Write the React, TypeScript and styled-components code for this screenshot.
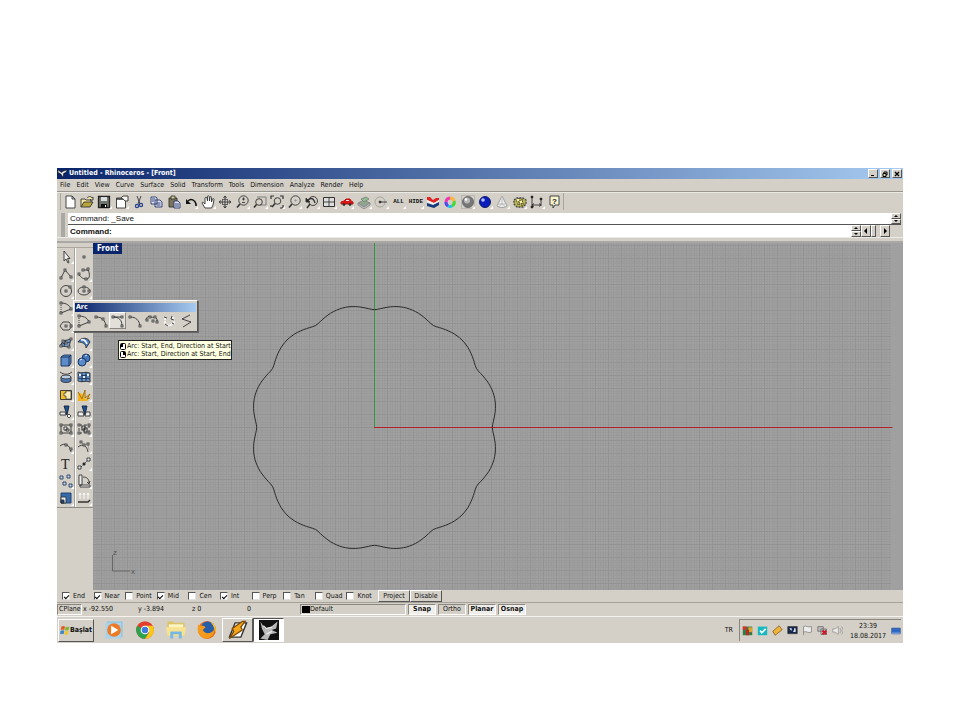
import React from 'react';
import styled, { createGlobalStyle, css } from 'styled-components';

const ui = '"DejaVu Sans Condensed", "Noto Sans", sans-serif';
const face = '#d4d0c8';

const Global = createGlobalStyle`
  *, *::before, *::after { box-sizing: border-box; }
  body { margin: 0; background: #fff; color: #111; font-family: ${ui}; font-size: 7px; line-height: 9px; }
  button, input { font: inherit; color: inherit; margin: 0; padding: 0; border: 0; background: none; }
  svg { display: block; }
`;

const raised = css`
  background: ${face};
  border: 1px solid;
  border-color: #fff #555 #555 #fff;
`;
const sunken = css`
  border: 1px solid;
  border-color: #8a8780 #fff #fff #8a8780;
`;

const Page = styled.main`padding: 168px 57px 77px;`;
const Window = styled.div`background: ${face}; display: flex; flex-direction: column; white-space: nowrap;`;

const TitleBar = styled.header`
  height: 11px; display: flex; align-items: center; gap: 1px; padding: 0 1px;
  background: linear-gradient(90deg, #0a246a, #a6caf0); color: #fff;
`;
const Title = styled.h1`margin: 0; flex: 1; font: bold 7px/9px ${ui};`;
const CaptionButton = styled.button<{ $spaced?: boolean }>`
  ${raised} width: 10px; height: 9px; display: grid; place-items: center;
  & + & { margin-left: ${p => (p.$spaced ? 1 : -1)}px; }
`;
const MenuBar = styled.nav`
  height: 13px; display: flex; align-items: center; gap: 6px; padding: 0 3px;
  border-bottom: 1px solid #9a9790;
`;
const MenuItem = styled.button`line-height: 9px;`;

const ToolBar = styled.div`height: 21px; display: flex; align-items: flex-start; padding-left: 3px; border-top: 1px solid #eceae5;`;
const ToolGrid = styled.div`
  width: 504px; height: 17px; display: grid; grid-template-columns: repeat(29, 1fr);
  border-left: 1px solid #aaa69e; border-right: 1px solid #aaa69e;
`;
const ToolButton = styled.button<{ $hot?: boolean; $flyout?: boolean }>`
  display: grid; place-items: center; min-width: 0; min-height: 0; position: relative;
  ${p => p.$hot && css`border: 1px solid; border-color: #fff #8a8780 #8a8780 #fff; background: #e3e0da;`}
  ${p => p.$flyout && css`
    &::after { content: ''; position: absolute; right: 1px; bottom: 1px; border-left: 3px solid transparent; border-bottom: 3px solid #fff; }
  `}
`;

const CommandArea = styled.section`
  display: flex; gap: 3px; padding: 0 2px 0 4px; font-family: "Liberation Sans", sans-serif; font-size: 8px;
`;
const Grip = styled.div`width: 4px; background: #aaa8a4;`;
const CommandRows = styled.div`flex: 1; display: flex; flex-direction: column;`;
const CommandRow = styled.div<{ $top?: boolean }>`
  height: 12px; display: flex; padding-right: ${p => (p.$top ? 0 : 11)}px;
  border-bottom: ${p => (p.$top ? '1px solid #555' : '0')};
`;
const CommandLine = styled.label<{ $strong?: boolean }>`
  flex: 1; display: flex; align-items: center; gap: 2px; background: #fff; padding-left: 2px;
  font-weight: ${p => (p.$strong ? 'bold' : 'normal')};
  input { flex: 1; min-width: 0; height: 10px; outline: 0; font-weight: normal; }
`;
const Spinner = styled.div`width: 10px; display: flex; flex-direction: column;`;
const Step = styled.button`${raised} flex: 1; min-height: 0; display: grid; place-items: center;`;
const HScroll = styled.div`display: flex; width: 29px;`;
const ScrollButton = styled.button<{ $end?: boolean }>`
  ${raised} width: 10px; display: grid; place-items: center; margin-left: ${p => (p.$end ? 'auto' : '0')};
`;
const Thumb = styled.div`${raised} width: 5px;`;
const Seam = styled.div`height: 6px; border-bottom: 2px solid #aaa8a4; border-top: 1px solid #eceae5;`;

const Workspace = styled.div`display: flex; position: relative; height: 347px;`;
const Side = styled.aside`width: 36px; padding-top: 4px;`;
const Palette = styled.div`
  height: 261px; display: grid; grid-template: repeat(15, 1fr) / 1fr 1fr; border-bottom: 1px solid #918e87; border-top: 1px solid #aaa69e;
  background: linear-gradient(90deg, transparent 17px, #a5a29b 17px, #a5a29b 18px, #fff 18px, #fff 19px, transparent 19px);
`;
const Viewport = styled.section`flex: 1; min-width: 0; position: relative; background: #a0a0a0;`;
const ViewLabel = styled.h2`
  position: absolute; left: 0; top: 0; margin: 0; padding: 0 4px; background: #0a246a; color: #fff;
  font: bold 8px/11px ${ui};
`;
const Floating = styled.div`
  ${raised} position: absolute; left: 16px; top: 57px; width: 125px; padding: 2px 1px; box-shadow: 1px 1px 0 #666;
`;
const FloatingTitle = styled.h3`
  margin: 0; padding-left: 1px; font: bold 7px/9px ${ui}; color: #fff; background: linear-gradient(90deg, #0a246a, #a6caf0);
`;
const FloatingTools = styled.div`height: 17px; display: grid; grid-template-columns: repeat(7, 17px);`;
const Tooltip = styled.div`
  position: absolute; left: 61px; top: 97px; padding: 1px 0 1px 1px; background: #ffffe1; border: 1px solid #222;
  line-height: 8px;
`;
const TipLine = styled.div`display: flex; align-items: center; gap: 1px;`;

const SnapBar = styled.div`height: 13px; display: flex; align-items: center; padding-left: 5px; border-bottom: 1px solid #a5a29b;`;
const SnapGrid = styled.div`width: 316px; display: grid; grid-template-columns: repeat(10, 1fr);`;
const Check = styled.label`
  display: flex; align-items: center; gap: 3px;
  input { appearance: none; width: 8px; height: 8px; background: #fff; border: 1px solid; border-color: #555 #e4e1dc #e4e1dc #555; display: grid; place-items: center; }
  input:checked::after { content: ''; width: 5px; height: 3px; border: solid #000; border-width: 0 0 1px 1px; transform: rotate(-45deg); }
`;
const PushButton = styled.button`${raised} width: 32px; height: 12px; line-height: 9px;`;

const StatusBar = styled.div`height: 13px; display: flex; align-items: center; padding: 1px 0;`;
const Pane = styled.div<{ $w: number; $sunken?: boolean }>`
  width: ${p => p.$w}px; height: 11px; display: flex; align-items: center; padding-left: 1px;
  ${p => p.$sunken && sunken}
`;
const Swatch = styled.i`width: 8px; height: 7px; background: #000;`;
const Toggle = styled.button<{ $on?: boolean }>`
  ${sunken} width: 28px; height: 11px; line-height: 9px; margin-left: 2px;
  ${p => p.$on && css`font-weight: bold; background: #efeeeb;`}
`;

const TaskBar = styled.footer`height: 27px; display: flex; align-items: center; border-top: 1px solid #f4f3f0; padding: 0 2px 0 1px;`;
const Start = styled.button`
  ${raised} width: 36px; height: 23px; display: flex; align-items: center; justify-content: center; font-weight: bold; margin-right: 4px;
`;
const Task = styled.button<{ $state?: 'up' | 'down' }>`
  width: 31px; height: 24px; display: grid; place-items: center; border: 1px solid transparent;
  ${p => p.$state === 'up' && raised}
  ${p => p.$state === 'down' && css`${sunken} background: #fff; border-color: #555 #fff #fff #555;`}
`;
const Language = styled.span`margin-left: auto; margin-right: 6px;`;
const Tray = styled.div`${sunken} flex: none; height: 22px; display: flex; align-items: center; border-right: 0; border-bottom: 0;`;
const TrayButton = styled.button`width: 15px; height: 14px; display: grid; place-items: center;`;
const Clock = styled.time`width: 46px; text-align: center; line-height: 10px;`;

const K = '#333';
const Node = ({ x, y }: { x: number; y: number }) => <rect x={x - 1} y={y - 1} width="2" height="2" fill="#ddd" stroke={K} strokeWidth="0.8" />;
const nodes = (...pts: number[][]) => pts.map(([x, y], i) => <Node key={i} x={x} y={y} />);

const Icon = ({ children, size = 14 }: { children: React.ReactNode; size?: number }) => (
  <svg width={size} height={size} viewBox="0 0 14 14" fill="none" stroke={K} strokeWidth="0.9" aria-hidden="true">{children}</svg>
);

const lens = (extra: React.ReactNode) => <><circle cx="7.5" cy="5.5" r="4.7" /><path d="M4 9L1 12.5" strokeWidth="1.6" />{extra}</>;

const tools: [string, React.ReactNode, boolean?][] = [
  ['New', <path d="M3 1h6l3 3v9H3zM9 1v3h3" fill="#fff" />],
  ['Open', <><path d="M1 12V4h4l1 1h5v2M7 3c2-2 4-2 5 0l1-1v3h-3l1-1" fill="#f3e69b" /><path d="M1 12l3-5h9l-3 5z" fill="#b9a53a" /></>],
  ['Save', <><path d="M1.5 1.5h11v11h-11z" fill="#6e756d" stroke="#222" strokeWidth="1.3" /><path d="M4 2h6v4H4z" fill="#ddd" stroke="none" /><path d="M4 9h6v4H4z" fill="#111" stroke="none" /><path d="M8 10h1v2H8z" fill="#fff" stroke="none" /></>, true],
  ['Properties', <><path d="M1.500 3h9v10h-9z" fill="#fff" /><path d="M1.500 4h9" strokeWidth="1.500" /><path d="M6 3l2-2h5v5h-3L8 4z" fill="#f3f1ec" /></>, true],
  ['Cut', <><path d="M5 1l3 8M9 1L6 9" stroke="#334" /><circle cx="5" cy="11" r="1.600" stroke="#25408d" strokeWidth="1.200" /><circle cx="9" cy="10" r="1.600" stroke="#25408d" strokeWidth="1.200" /></>],
  ['Copy', <><path d="M2 2h5l1 1v6H2zM6 5h5l2 2v5H6z" fill="#dfe3f4" stroke="#29356b" /><path d="M3 4h3M3 6h2M7.500 8h4M7.500 10h4" stroke="#29356b" /></>],
  ['Paste', <><path d="M2 3h8v9H2z" fill="#7c7559" /><path d="M4 1h4v3H4z" fill="#d7ce92" /><path d="M7 6h4l2 2v5H7z" fill="#dfe3f4" stroke="#29356b" /><path d="M8 9h4M8 11h4" stroke="#29356b" /></>],
  ['Undo', <><path d="M4 6c3-3 7-1 8 3v2" strokeWidth="1.600" stroke="#111" /><path d="M2 4v5h5z" fill="#111" stroke="none" /></>, true],
  ['Pan', <path d="M4 13L1 8c0-1 1-1 2 0l1 1V3c0-1 2-1 2 0l.5 3V1.500c0-1 1.500-1 1.700 0L8.500 6l.5-4c.3-1 1.500-.5 1.500.500L10.500 7l1-3c.500-1 1.500-.5 1.500.5L12 10l-1.500 3z" fill="#fff" />, true],
  ['Rotate view', <><path d="M7 1v12M1 7h12M5.500 3L7 1l1.500 2M5.500 11L7 13l1.500-2M3 5.500L1 7l2 1.500M11 5.500L13 7l-2 1.500" /><path d="M4 5c2-1 4-1 6 0M4 9c2 1 4 1 6 0M5 4c-1 2-1 4 0 6M9 4c1 2 1 4 0 6" strokeWidth=".7" /></>],
  ['Zoom dynamic', lens(<path d="M6 4h3M7.500 2.500v3M6 7.500h3" />), true],
  ['Zoom window', <><path d="M4 2h9v8H7" stroke="#777" /><circle cx="6" cy="7" r="3.300" /><path d="M3.500 9.500L1 12.500" strokeWidth="1.6" /></>, true],
  ['Zoom extents', <><path d="M1 4V1h3M10 1h3v3M13 10v3h-3M1 10v2" strokeWidth="1.2" /><circle cx="7.500" cy="6" r="3.300" /><path d="M5 8.500L2 12" strokeWidth="1.6" /></>, true],
  ['Zoom selected', lens(<circle cx="7.500" cy="5.500" r=".8" fill="#999" stroke="#999" />), true],
  ['Undo view', <><circle cx="8" cy="6" r="4.500" /><path d="M5 9l-3 4M3 5c4-3 6-1 7 3" strokeWidth="1.400" /><path d="M1 3v4h4z" fill="#222" /></>, true],
  ['Four viewports', <><path d="M1.500 2.500h11v9h-11z" fill="#dedede" strokeWidth="1" /><path d="M7 2v10M1 7h12" /></>, true],
  ['Named view', <><path d="M1 9V7l3-1 2-2h4l1 2 2 1v2z" fill="#df1515" stroke="#b40b0b" /><path d="M6 5.500h3" stroke="#fff" /><circle cx="4" cy="9.500" r="1" fill="#222" /><circle cx="10" cy="9.500" r="1" fill="#222" /></>, true],
  ['Set cplane', <><path d="M1 8l6-3 6 3-6 4z" fill="#8fa690" stroke="#888" /><path d="M1 8v2l6 4 6-4V8l-6 4z" fill="#c2c2c2" stroke="#888" /><path d="M4 4l5-2 3 2-5 3z" fill="#91bd92" stroke="#798579" /></>, true],
  ['Circle', <><circle cx="6" cy="7" r="5" stroke="#a0a09a" /><path d="M6 7h7" /><circle cx="6" cy="7" r="1" fill="#222" /></>, true],
];

const late: [string, React.ReactNode, boolean?][] = [
  ['Layers', <><path d="M1 2h3l3 3 3-2h3v2L8 8 1 5z" fill="#e32222" stroke="none" /><path d="M1 5l7 3 5-3v2L8 10 1 7z" fill="#f4f4f4" stroke="none" /><path d="M1 8l6 2 6-3v3l-5 3-7-2z" fill="#173a7b" stroke="none" /></>],
  ['Colors', <g strokeWidth="3"><path d="M7 3a4.300 4.300 0 0 1 4 3" stroke="#ffb23a" /><path d="M11 6a4.300 4.300 0 0 1-2 5" stroke="#48d838" /><path d="M9 11a4.300 4.300 0 0 1-4 0" stroke="#22c3e0" /><path d="M5 11a4.300 4.300 0 0 1-2-4" stroke="#5146ef" /><path d="M3 7a4.300 4.300 0 0 1 4-4" stroke="#ef39b4" /></g>],
  ['Shade', <><circle cx="7" cy="7" r="5.500" fill="#777" stroke="#666" /><circle cx="6" cy="5.500" r="3" fill="#b8b8b8" stroke="none" /><circle cx="5" cy="4.500" r="1.200" fill="#fff" stroke="none" /><path d="M.5.5h13v13H.5z" stroke="#999" strokeDasharray="1 1" /></>, true],
  ['Render', <><circle cx="7" cy="7" r="5.500" fill="#0b1ebc" stroke="#07115e" /><circle cx="5" cy="5" r="1.800" fill="#b9c5ff" stroke="none" /></>, true],
  ['Spotlight', <><path d="M7 1L2 11c2 2 8 2 10 0z" fill="#eee" stroke="#999" /><path d="M7 1v9M3 9h8M4 12l3-4 3 4" stroke="#bbb" /></>, true],
  ['Options', <><path d="M1 5l3-2h6l3 2v4l-3 3H4L1 9z" fill="#b9b355" stroke="#444" strokeDasharray="2 1" strokeWidth="1.300" /><path d="M3 6h8M4 9h7M6 3v8M9 4v7" strokeDasharray="1 1" stroke="#333" /><path d="M4 4h2v2H4zM7 6h2v2H7z" fill="#f2efbf" stroke="none" /></>, true],
  ['Dimension', <><path d="M2 2v10M11 4v7M2 10h9M4 8.500L2 10l2 1.500M9 8.500l2 1.500-2 1.500" /><path d="M1 1h2v2H1zM10 3h2v2h-2zM1 11h2v2H1z" fill="#222" strokeWidth=".5" /></>, true],
];

const arcSpan = <><path d="M2 2c6 0 9 3 10 6L2 12" /><path d="M2 2v10" strokeDasharray="1 1" />{nodes([2, 2], [12, 8], [2, 12])}</>;

const palette: [string, React.ReactNode][] = [
  ['Select', <path d="M5 1v10l2-2 2 4 1-.5-1.500-4H11z" fill="#eee" />],
  ['Point', nodes([7, 7])],
  ['Polyline', <><path d="M2 11L6 3l7 8" />{nodes([2, 11], [6, 3], [12, 10])}</>],
  ['Curve', <><path d="M6 3h5c2 3 2 9-1 9-3 0-4 0-8-4" />{nodes([6, 3], [11, 2], [2, 7], [9, 12])}</>],
  ['Circle', <><circle cx="7" cy="7" r="5.500" />{nodes([7, 7], [11, 3])}</>],
  ['Ellipse', <><ellipse cx="7" cy="7" rx="6" ry="4" />{nodes([7, 7], [7, 3], [12, 7])}</>],
  ['Arc', arcSpan],
  ['Rectangle', <><path d="M2 3h10v8H2z" />{nodes([2, 11], [12, 3])}</>],
  ['Polygon', <><path d="M4 3h6l3 4-3 4H4L1 7z" />{nodes([7, 7], [12, 7])}</>],
  ['Rounded', <><path d="M3 3h6c4 0 4 8 0 8H3z" />{nodes([3, 11], [10, 4])}</>],
  ['Surface points', <><path d="M1 10l3-5 8-2-2 8z" fill="#7ea0cf" /><path d="M3 8l8-2M7 4l-2 6" stroke="#234" />{nodes([2, 10], [4, 5], [12, 3], [10, 11], [7, 7])}</>],
  ['Surface', <><path d="M1 6c3-5 10-5 12 0l-4 6c0-4-3-6-8-6z" fill="#487bc0" /><path d="M4 4c3-1 5 1 6 4" stroke="#fff" strokeWidth="1.600" /></>],
  ['Box', <path d="M2 4l3-2h7v8l-2 3H2zM2 4h8v9M10 4l2-2" fill="#5d8cc8" stroke="#122d57" />],
  ['Sphere', <><circle cx="9" cy="5" r="4" fill="#4477bb" stroke="#122d57" /><circle cx="5" cy="9" r="4" fill="#5c8bcb" stroke="#122d57" /><path d="M3 7l2-1M8 3l2-1" stroke="#fff" /></>],
  ['Tube', <><path d="M2 7v4c2 2 8 2 10 0V7" fill="#4878b5" /><ellipse cx="7" cy="7" rx="5" ry="2" fill="#b8cde6" /><path d="M1 2c4 3 8 3 12 0" /></>],
  ['Mesh', <><path d="M1 2c4 2 7-1 12 1v9c-4-2-8 1-12-1z" fill="#6c94c6" /><path d="M1 5c4 2 8-1 12 1M1 8c4 2 8-1 12 1M5 3v9M9 2v9" stroke="#122d57" /><path d="M2 4h2v2H2zM6 6h2v2H6zM10 4h2v2h-2z" fill="#e8eef5" stroke="none" /></>],
  ['Puzzle', <><path d="M1.500 2.500h11v9h-11z" fill="#f3be2a" /><path d="M7 3v2H5v3h2v3h5V3z" fill="#f8edba" strokeWidth=".7" /></>],
  ['Explode', <><path d="M1 13V5l3 3 2-1 2 4 4-1-2 3z" fill="#f5b31b" stroke="none" /><path d="M1 4l4 7 3-9v8l5-4-3 5 3-1" stroke="#9b6b08" fill="#f5b31b" /></>],
  ['Trim', <><path d="M5 1h5L8 10z" fill="#1d5094" stroke="#123" /><path d="M1 7h5l1 3H1z" fill="#eee" /><path d="M8 11l2-2 2 2-2 2z" fill="#fff" /></>],
  ['Split', <><path d="M5 1h5L8 10z" fill="#1d5094" stroke="#123" /><path d="M1 7h5l1 4H1zM9 7h4v4H8z" fill="#eee" /></>],
  ['Group', <><path d="M2 3h10v8H2z" /><path d="M5 5h3v3H5zM7 7h3v2H7z" fill="#eee" />{nodes([2, 3], [12, 3], [2, 11], [12, 11])}</>],
  ['Ungroup', <><path d="M2 3h10v8H2z" strokeDasharray="3 2" /><path d="M5 4h3v4H5zM7 6h3v4H7z" strokeWidth="1.200" fill="#eee" />{nodes([2, 3], [12, 3], [2, 11], [12, 11])}</>],
  ['Edit points', <><path d="M1 6c5-4 10-1 11 6" />{nodes([7, 5], [12, 9])}</>],
  ['Control points', <><path d="M1 7c5-4 9-1 10 5" /><path d="M4 2l3 3 4-1 1 6" stroke="#888" strokeWidth=".6" />{nodes([4, 2], [7, 5], [11, 4])}</>],
  ['Text', <text x="2" y="12" fontFamily="Liberation Serif" fontSize="14" fill="#222" stroke="none">T</text>],
  ['Move', <><path d="M4 10l6-6" strokeDasharray="2 1" /><path d="M1 9h3v3H1zM10 1h3v3h-3z" fill="#eee" /><path d="M6 6h2v2H6z" fill="#111" /></>],
  ['Copy objects', <path d="M1 2h3v3H1zM8 1h3v3H8zM4 8h3v3H4zM10 10h3v3h-3z" fill="#c9d7e8" stroke="#223a60" />],
  ['Rotate', <><path d="M2 1h3v10H2zM3 11h10v2H3z" fill="#eee" /><path d="M6 3c4 0 6 2 6 6M10 8l2 2 1-3" /></>],
  ['Scale', <><path d="M2 2h10v10H2z" fill="#386aa9" stroke="#193b6a" /><path d="M2 6h5v6H2z" fill="#e8edf3" /><path d="M2 9h3v3H2z" fill="#19447e" /></>],
  ['Analyze', <><path d="M1 11h10l2-2" strokeWidth="1.400" /><path d="M3 8V3M7 8V3M11 8V3M2 4l1-2 1 2M6 4l1-2 1 2M10 4l1-2 1 2" stroke="#fff" /></>],
];

const arcs: [string, React.ReactNode][] = [
  ['Center, start, angle', arcSpan],
  ['Start, end, point', <><path d="M2 3c6 0 9 3 10 9" />{nodes([2, 3], [9, 5], [12, 12])}</>],
  ['Start, end, direction', <><path d="M2 3c6 0 9 3 9 9M2 3h9" />{nodes([2, 3], [11, 3], [11, 12])}</>],
  ['Start, end, radius', <><path d="M2 3c6 0 9 3 10 9" />{nodes([2, 3], [12, 12])}</>],
  ['Through points', <><path d="M1 6c1-4 3-4 5-3s4-1 6 2v4" />{nodes([2, 6], [5, 3], [10, 3], [8, 7], [12, 8])}</>],
  ['Tangent', <><path d="M3 3v6l4 3 5-3-1-6" stroke="#f4f4f4" strokeWidth="2" strokeDasharray="3 1" /><path d="M2 3l3 1M10 2l-1 3 3 1M3 10l3 2M10 9l2 1" /></>],
  ['Polyline arc', <path d="M11 1L3 5l9 3-8 5" />],
];

const scallop = Array.from({ length: 241 }, (_, i) => {
  const a = (i / 240) * Math.PI * 2;
  const r = 116.6 + 7 * Math.sqrt(Math.sin(6 * a) ** 2 + 0.03);
  return `${i ? 'L' : 'M'}${(281.5 + r * Math.cos(a)).toFixed(1)} ${(184.5 - r * Math.sin(a)).toFixed(1)}`;
}).join('') + 'Z';

const Arrow = ({ d }: { d: string }) => <svg width="6" height="6" viewBox="0 0 6 6"><path d={d} fill="#000" /></svg>;
const TinyArrow = ({ up }: { up?: boolean }) => <svg width="4" height="2" viewBox="0 0 4 2"><path d={up ? 'M0 2L2 0l2 2z' : 'M0 0l2 2 2-2z'} fill="#000" /></svg>;
const Steps = () => (
  <Spinner>
    <Step aria-label="Up"><TinyArrow up /></Step>
    <Step aria-label="Down"><TinyArrow /></Step>
  </Spinner>
);
const Mouse = ({ right }: { right?: boolean }) => (
  <svg width="6" height="7" viewBox="0 0 6 7"><rect x=".5" y=".5" width="5" height="6" rx="1" fill="#fff" stroke="#000" /><path d={right ? 'M3 1h2v3H3z' : 'M1 1h2v3H1z'} fill="#000" /></svg>
);

const tasks: [string, React.ReactNode, ('up' | 'down')?][] = [
  ['Media player', <g stroke="none"><path d="M2 1h11v11H2z" fill="#91c6e6" /><path d="M1 2h11v11H1z" fill="#a9d3ec" /><circle cx="7" cy="7" r="4.800" fill="#ed7b25" /><path d="M5 4l5 3-5 3z" fill="#fff" /></g>],
  ['Chrome', <g stroke="none"><circle cx="7" cy="7" r="6.200" fill="#e33d2e" /><path d="M1.600 4A6.200 6.200 0 0 0 7 13.200L10 8 7 7z" fill="#2ba24c" /><path d="M7 13.200A6.200 6.200 0 0 0 12.500 4H7v3l3 1.500z" fill="#fbc716" /><circle cx="7" cy="7" r="3" fill="#fff" /><circle cx="7" cy="7" r="2.300" fill="#3f7be0" /></g>],
  ['Explorer', <g stroke="none"><path d="M1 1h4l1 1h7v9H1z" fill="#dcc469" /><path d="M2 3h10v6H2z" fill="#fbf3c0" /><path d="M0 5h14l-1 6H1z" fill="#f6e28f" /><path d="M3 8h8v5H9v-3H5v3H3z" fill="#75b8e5" /></g>],
  ['Firefox', <g stroke="none"><circle cx="7" cy="7" r="6.300" fill="#e66b18" /><circle cx="7.500" cy="5.500" r="4.500" fill="#285da7" /><path d="M1 3c1 2 3 0 5 2L4 7c2 3 5 3 8 0 0 4-3 6-6 6S-1 9 1 3z" fill="#f59a1b" /><path d="M9 1c3 1 5 5 4 8-1-3-1-5-4-8z" fill="#f8c62c" /></g>],
  ['Winamp', <><path d="M5 2h8l-4 10H1z" fill="#fff" stroke="#333" strokeWidth="1" /><path d="M10 1L3 6l1 2-3 5 9-6-1-2 3-4z" fill="#f6a51b" stroke="#7a4a07" /></>, 'up'],
  ['Rhinoceros', <><path d="M0 0h14v14H0z" fill="#111" stroke="none" /><path d="M1 1l3 5 4-1 5-4-1 5-3 1 4 2-5 1-2 4-5-1 3-3-2-4z" fill="#b9b9b9" stroke="none" /><path d="M3 4l2 2 4-1M5 10l4-2" stroke="#eee" /></>, 'down'],
];

const tray: [string, React.ReactNode][] = [
  ['Guard', <g stroke="none"><path d="M1 2h12v11H1z" fill="#347d4a" /><path d="M1 2h5v4H1z" fill="#db3126" /><path d="M8 3h5v6H8z" fill="#d9a72d" /><path d="M5 6h4v7H5z" fill="#b42c24" /></g>],
  ['Check', <><path d="M1 2h12v11H1z" fill="#18b8c0" stroke="none" /><path d="M4 7l2 3 5-5" stroke="#fff" strokeWidth="2" /></>],
  ['Winamp', <path d="M9 1L1 8l3 5 9-7z" fill="#efb43b" stroke="#765014" />],
  ['Display', <><path d="M1 2h12v9H1z" fill="#18274c" /><path d="M3 4h3v3h3V4h2v5H8V7H5z" fill="#d9e3f1" stroke="none" /></>],
  ['Actions', <path d="M2 13V2c4-2 5 2 10 0v7c-5 2-6-2-10 0" fill="#eee" stroke="#777" />],
  ['Network', <><path d="M1 2h7v6H1zM5 5h7v7H5z" fill="#bbb" stroke="#666" /><path d="M7 7l5 5M12 7l-5 5" stroke="#c91d2b" strokeWidth="2.500" /></>],
  ['Volume', <><path d="M1 5h3l4-3v10L4 9H1z" fill="#eee" stroke="#888" /><path d="M10 4c2 2 2 4 0 6M12 2c3 3 3 7 0 10" stroke="#888" /></>],
];

const menus = ['File', 'Edit', 'View', 'Curve', 'Surface', 'Solid', 'Transform', 'Tools', 'Dimension', 'Analyze', 'Render', 'Help'];
const snaps: [string, boolean][] = [['End', true], ['Near', true], ['Point', false], ['Mid', true], ['Cen', false], ['Int', true], ['Perp', false], ['Tan', false], ['Quad', false], ['Knot', false]];

const Tool = ({ item: [name, art, flyout], hot }: { item: [string, React.ReactNode, boolean?]; hot?: boolean }) => (
  <ToolButton aria-label={name} $hot={hot} $flyout={flyout}><Icon>{art}</Icon></ToolButton>
);
const WordIcon = styled.span`font: bold 6px/10px "Liberation Mono", monospace;`;

export default function App() {
  return (
    <Page>
      <Global />
      <Window>
        <TitleBar>
          <Icon size={10}><path d="M0 1l5 4 2-2 6-2-2 4-3 1-1 6-3-5-4-2z" fill="#eee" stroke="#111" /></Icon>
          <Title>Untitled - Rhinoceros - [Front]</Title>
          <CaptionButton aria-label="Minimize"><Arrow d="M1 4h3v1H1z" /></CaptionButton>
          <CaptionButton aria-label="Restore"><svg width="6" height="6" viewBox="0 0 6 6"><path d="M2 2V1h3v3H4M1 2.500h3v3H1z" fill="none" stroke="#000" /></svg></CaptionButton>
          <CaptionButton aria-label="Close" $spaced><svg width="6" height="6" viewBox="0 0 6 6"><path d="M1 1l4 4M5 1L1 5" stroke="#000" strokeWidth="1.300" /></svg></CaptionButton>
        </TitleBar>
        <MenuBar>{menus.map(m => <MenuItem key={m}>{m}</MenuItem>)}</MenuBar>
        <ToolBar>
          <ToolGrid>
            {tools.map(t => <Tool key={t[0]} item={t} />)}
            <ToolButton $flyout><WordIcon>ALL</WordIcon></ToolButton>
            <ToolButton $flyout><WordIcon>HIDE</WordIcon></ToolButton>
            {late.map(t => <Tool key={t[0]} item={t} />)}
            <ToolButton aria-label="Help">
              <Icon><path d="M3 1h9v9H8l-2 3v-3H3z" fill="#f7f5d0" /><text x="5" y="9" fontFamily="Liberation Sans" fontSize="8" fontWeight="bold" fill="#222" stroke="none">?</text></Icon>
            </ToolButton>
          </ToolGrid>
        </ToolBar>
        <CommandArea>
          <Grip />
          <CommandRows>
            <CommandRow $top><CommandLine as="div">Command: _Save</CommandLine><Steps /></CommandRow>
            <CommandRow>
              <CommandLine $strong>Command:<input type="text" /></CommandLine>
              <Steps />
              <HScroll>
                <ScrollButton aria-label="Scroll left"><Arrow d="M4 0v6L1 3z" /></ScrollButton>
                <Thumb />
                <ScrollButton aria-label="Scroll right" $end><Arrow d="M2 0v6l3-3z" /></ScrollButton>
              </HScroll>
            </CommandRow>
          </CommandRows>
        </CommandArea>
        <Seam />
        <Workspace>
          <Side><Palette>{palette.map(([n, a]) => <Tool key={n} item={[n, a, n !== 'Text' && n !== 'Point']} />)}</Palette></Side>
          <Viewport>
            <svg width="100%" height="347" fill="none">
              <defs>
                <pattern id="grid" width="13" height="13" x="8" y="2" patternUnits="userSpaceOnUse">
                  <path d="M3.500 0v13M5.500 0v13M8.500 0v13M10.500 0v13M0 3.500h13M0 5.500h13M0 8.500h13M0 10.500h13" stroke="#9a9a9a" />
                  <path d="M.5 0v13M0 .5h13" stroke="#939393" />
                </pattern>
              </defs>
              <rect width="98.5%" height="347" fill="url(#grid)" />
              <path d="M281.500 0v184" stroke="#2f9a3c" />
              <rect x="281" y="184" width="64%" height="1" fill="#b4202a" />
              <path d={scallop} stroke="#2a2a2a" />
              <path d="M19.500 312v16H37" stroke="#666" />
              <text x="20" y="312" fontSize="8" fill="#555" fontFamily="Liberation Sans">z</text>
              <text x="38" y="331" fontSize="8" fill="#555" fontFamily="Liberation Sans">x</text>
            </svg>
            <ViewLabel>Front</ViewLabel>
          </Viewport>
          <Floating>
            <FloatingTitle>Arc</FloatingTitle>
            <FloatingTools>{arcs.map((a, i) => <Tool key={a[0]} item={a} hot={i === 2} />)}</FloatingTools>
          </Floating>
          <Tooltip role="tooltip">
            <TipLine><Mouse />Arc: Start, End, Direction at Start</TipLine>
            <TipLine><Mouse right />Arc: Start, Direction at Start, End</TipLine>
          </Tooltip>
        </Workspace>
        <SnapBar>
          <SnapGrid>{snaps.map(([n, on]) => <Check key={n}><input type="checkbox" defaultChecked={on} />{n}</Check>)}</SnapGrid>
          <PushButton>Project</PushButton>
          <PushButton>Disable</PushButton>
        </SnapBar>
        <StatusBar>
          <Pane $w={25} $sunken>CPlane</Pane>
          <Pane $w={55}>x -92.550</Pane>
          <Pane $w={54}>y -3.894</Pane>
          <Pane $w={55}>z 0</Pane>
          <Pane $w={54}>0</Pane>
          <Pane $w={106} $sunken><Swatch />Default</Pane>
          <Toggle $on>Snap</Toggle>
          <Toggle>Ortho</Toggle>
          <Toggle $on>Planar</Toggle>
          <Toggle $on>Osnap</Toggle>
        </StatusBar>
        <TaskBar>
          <Start>
            <Icon size={10}><g stroke="none"><path d="M2 2c2-1 3-1 5 0L6 7C4 6 3 6 1 7z" fill="#e35b25" /><path d="M8 2c2 1 3 1 5 0l-1 5c-2 1-3 1-5 0z" fill="#7eb72e" /><path d="M1 8c2-1 3-1 5 0l-1 5c-2-1-3-1-5 0z" fill="#3686ce" /><path d="M7 8c2 1 3 1 5 0l-1 5c-2 1-3 1-5 0z" fill="#f4c42d" /></g></Icon>
            Başlat
          </Start>
          {tasks.map(([n, a, s]) => <Task key={n} aria-label={n} $state={s}><Icon size={20}>{a}</Icon></Task>)}
          <Language>TR</Language>
          <Tray>
            {tray.map(([n, a]) => <TrayButton key={n} aria-label={n}><Icon size={11}>{a}</Icon></TrayButton>)}
            <Clock>23:39<br />18.08.2017</Clock>
            <Icon size={10}><path d="M1 3h12v8H1z" fill="#2f69c5" stroke="#244c91" /><path d="M1 10h12" stroke="#dce6f5" /></Icon>
          </Tray>
        </TaskBar>
      </Window>
    </Page>
  );
}
